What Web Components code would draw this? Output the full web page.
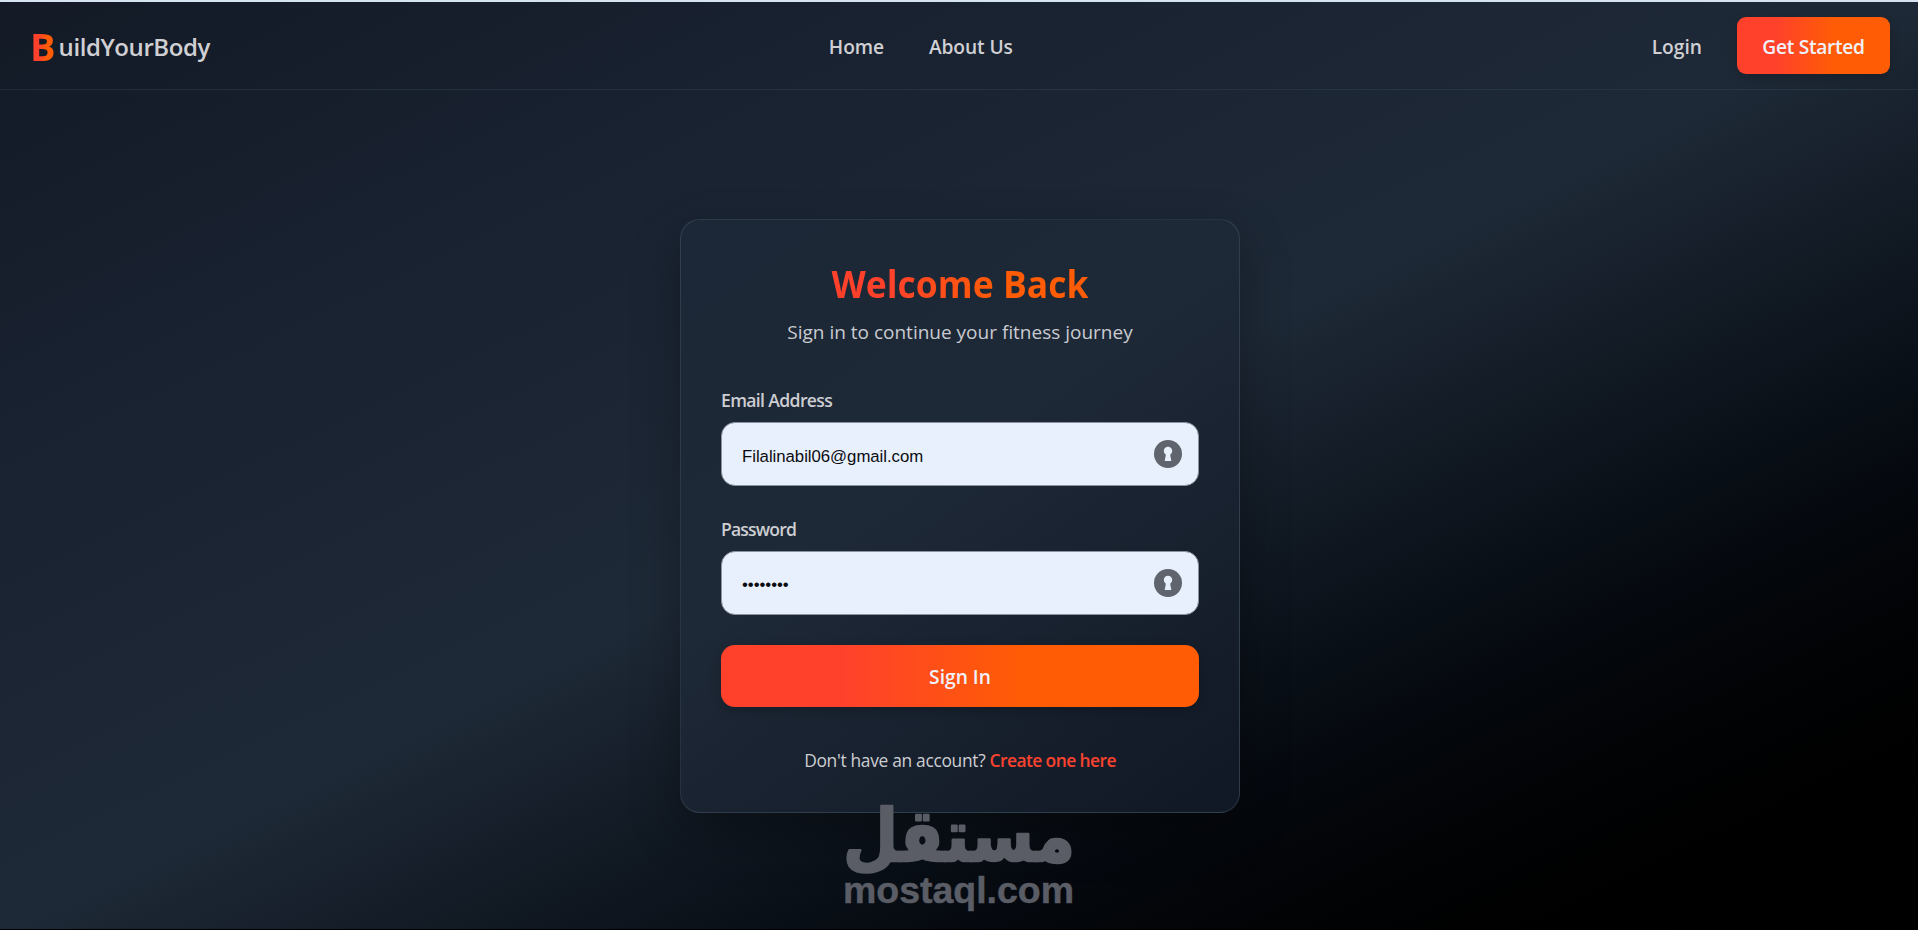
<!DOCTYPE html>
<html lang="en">
<head>
<meta charset="UTF-8">
<title>BuildYourBody - Login</title>
<style>
  html, body { margin: 0; height: 100%; }
  body { background: #000; overflow: hidden; font-family: "Open Sans", "Noto Sans", sans-serif; }
</style>
</head>
<body>
<login-page></login-page>

<script>
/**
 * BuildYourBody - login page components
 */

class GradientButton extends HTMLElement {
  constructor() {
    super();
    this.attachShadow({ mode: 'open' });
    this.shadowRoot.innerHTML = `
      <style>
        :host { display: block; }
        button {
          display: flex;
          align-items: center;
          justify-content: center;
          width: 100%;
          height: 100%;
          padding: 2px 0 0;
          border: 0;
          border-radius: var(--radius, 12px);
          background: linear-gradient(90deg, #ff412c 25%, #ff5c05 63%);
          box-shadow: 0 4px 12px rgba(0, 0, 0, 0.18);
          color: #f0f2fb;
          font: 650 19.2px/26px "Open Sans", sans-serif;
          letter-spacing: var(--tracking, 0);
        }
      </style>
      <button type="button"><slot></slot></button>
    `;
  }
}
customElements.define('gradient-button', GradientButton);

class SiteHeader extends HTMLElement {
  constructor() {
    super();
    this.attachShadow({ mode: 'open' });
    this.shadowRoot.innerHTML = `
      <style>
        :host {
          display: flex;
          align-items: center;
          justify-content: space-between;
          box-sizing: border-box;
          height: 88px;
          padding: 0 28px 0 30px;
          border-bottom: 1px solid rgba(60, 85, 100, 0.3);
          color: #d0d0d4;
          font-size: 19.2px;
          font-weight: 650;
        }
        .brand { display: flex; align-items: center; font-size: 24px; font-weight: 600; letter-spacing: -0.4px; }
        .brand b {
          margin-right: 3px;
          font-size: 38px;
          line-height: 50px;
          font-weight: 700;
          letter-spacing: 0;
          background: linear-gradient(90deg, #ff412c 35%, #ff5c05 65%);
          -webkit-background-clip: text;
          color: transparent;
        }
        .brand span { padding-top: 1px; }
        nav { display: flex; gap: 45px; padding-top: 2px; letter-spacing: -0.1px; }
        .actions { display: flex; align-items: center; gap: 16px; }
        .login { padding: 2px 19px 0 20px; }
        gradient-button { width: 153px; height: 57px; --radius: 9px; --tracking: -0.3px; }
      </style>
      <div class="brand"><b>B</b><span>uildYourBody</span></div>
      <nav><span>Home</span><span>About Us</span></nav>
      <div class="actions">
        <span class="login">Login</span>
        <gradient-button>Get Started</gradient-button>
      </div>
    `;
  }
}
customElements.define('site-header', SiteHeader);

class FormField extends HTMLElement {
  constructor() {
    super();
    this.attachShadow({ mode: 'open' });
  }

  connectedCallback() {
    const label = this.getAttribute('label');
    this.shadowRoot.innerHTML = `
      <style>
        :host { display: block; }
        label {
          display: block;
          height: 24px;
          margin-bottom: 10px;
          color: #cdced2;
          font-size: 17.6px;
          line-height: 24px;
          font-weight: 600;
          letter-spacing: var(--label-tracking, -0.65px);
        }
        .box {
          display: flex;
          align-items: center;
          justify-content: space-between;
          box-sizing: border-box;
          height: 64px;
          padding: 0 16px 0 20px;
          border: 1px solid #8b92a0;
          border-radius: 14px;
          background: #e8f0fe;
          color: #0b0c10;
          font: 16.8px/20px "Liberation Sans", Arial, sans-serif;
        }
        .value { padding-top: var(--value-drop, 4px); letter-spacing: -0.04px; }
        svg { display: block; }
      </style>
      <label>${label}</label>
      <div class="box">
        <span class="value"><slot></slot></span>
        <svg width="28" height="28" viewBox="0 0 28 28">
          <circle cx="14" cy="14" r="14" fill="#5f646d"/>
          <circle cx="14" cy="11" r="4.200" fill="#e8f0fe"/>
          <path d="M12.200 13h3.600l1.500 8h-6.600z" fill="#e8f0fe"/>
        </svg>
      </div>
    `;
  }
}
customElements.define('form-field', FormField);

class LoginCard extends HTMLElement {
  constructor() {
    super();
    this.attachShadow({ mode: 'open' });
    this.shadowRoot.innerHTML = `
      <style>
        :host {
          display: flex;
          flex-direction: column;
          box-sizing: border-box;
          width: 560px;
          height: 594px;
          padding: 38px 40px 0;
          border: 1px solid rgba(120, 140, 155, 0.22);
          border-radius: 20px;
          background: linear-gradient(145deg, #1c2737 0%, #1e2937 42%, #121926 95%);
          box-shadow: 0 20px 50px rgba(0, 0, 0, 0.3);
        }
        h1 {
          align-self: center;
          margin: 0;
          font-size: 38.4px;
          line-height: 50px;
          font-weight: 700;
          background: linear-gradient(90deg, #ff412c 22%, #ff5c05 65%);
          -webkit-background-clip: text;
          color: transparent;
          transform: scaleX(0.925);
        }
        .subtitle {
          margin: 11px 0 43px;
          text-align: center;
          color: #c9cbd0;
          font-size: 19px;
          line-height: 26px;
        }
        form-field.email { --value-drop: 6px; }
        form-field.password { margin-top: 31px; --label-tracking: -0.85px; }
        gradient-button { height: 62px; margin-top: 30px; --radius: 14px; }
        .signup {
          margin: 41px 0 0;
          text-align: center;
          color: #cdced2;
          font-size: 17.4px;
          line-height: 24px;
          letter-spacing: -0.32px;
        }
        .signup b { color: #fb432f; font-weight: 600; letter-spacing: -0.57px; }
      </style>
      <h1>Welcome Back</h1>
      <p class="subtitle">Sign in to continue your fitness journey</p>
      <form-field class="email" label="Email Address">Filalinabil06@gmail.com</form-field>
      <form-field class="password" label="Password">••••••••</form-field>
      <gradient-button>Sign In</gradient-button>
      <p class="signup">Don't have an account? <b>Create one here</b></p>
    `;
  }
}
customElements.define('login-card', LoginCard);

class SiteWatermark extends HTMLElement {
  constructor() {
    super();
    this.attachShadow({ mode: 'open' });
    this.shadowRoot.innerHTML = `
      <style>
        :host { display: block; }
        svg { display: block; overflow: visible; }
      </style>
      <svg width="232" height="110" viewBox="0 0 232 110" fill="#5a5d65" stroke="#5a5d65" stroke-linejoin="round">
        <text x="231" y="56" direction="rtl" stroke-width="2.500" font-family="DejaVu Sans" font-weight="700" font-size="72" textLength="232" lengthAdjust="spacingAndGlyphs">مستقل</text>
        <text x="-1" y="98" stroke-width="0.500" font-family="Liberation Sans" font-weight="700" font-size="37" textLength="231" lengthAdjust="spacingAndGlyphs">mostaql.com</text>
      </svg>
    `;
  }
}
customElements.define('site-watermark', SiteWatermark);

class LoginPage extends HTMLElement {
  constructor() {
    super();
    this.attachShadow({ mode: 'open' });
    this.shadowRoot.innerHTML = `
      <style>
        :host {
          display: flex;
          flex-direction: column;
          position: relative;
          box-sizing: border-box;
          height: 929px;
          border-top: 2px solid #d6e3f1;
          background: linear-gradient(to bottom right in oklab, #131a26, #192231 25%, #1e2937 50%, #000);
        }
        main { display: flex; justify-content: center; padding: 129px 0 0 2px; }
        /* floats over the bottom edge of the card */
        site-watermark { position: absolute; left: 844px; top: 803px; }
      </style>
      <site-header></site-header>
      <main><login-card></login-card></main>
      <site-watermark></site-watermark>
    `;
  }
}
customElements.define('login-page', LoginPage);
</script>
</body>
</html>
